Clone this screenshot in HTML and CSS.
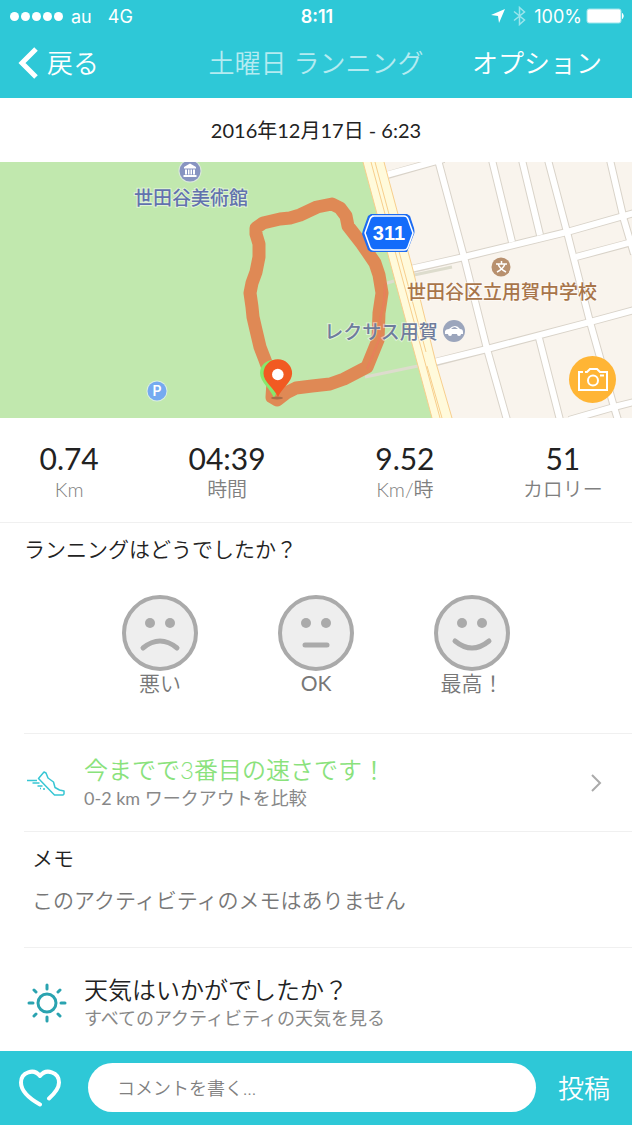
FILE: index.html
```html
<!DOCTYPE html>
<html lang="ja">
<head>
  <meta charset="UTF-8" />
  <meta name="viewport" content="width=device-width, initial-scale=1" />
  <title>土曜日 ランニング</title>
  <link rel="stylesheet" href="styles.css">
</head>
<body>
  <header class="top">
    <div class="status">
      <div class="status-left">
        <span class="signal"><i></i><i></i><i></i><i></i><i></i></span>
        <span>au</span>
        <span class="network">4G</span>
      </div>
      <b class="clock">8:11</b>
      <div class="status-right">
        <svg width="14" height="14" viewBox="0 0 14 14"><path d="M14 0 8 14 7 7 0 6z" fill="#fff"/></svg>
        <svg class="bluetooth" width="13" height="20" viewBox="0 0 13 20"><path d="M1 5.500 11.500 14 6.500 18.500V1.500L11.500 6 1 14.500" fill="none" stroke="#9be5ec" stroke-width="1.500"/></svg>
        <span>100%</span>
        <svg width="38" height="16" viewBox="0 0 38 16"><rect x="1" y="1" width="34" height="14" rx="2" fill="#fff" stroke="#9be5ec"/><path d="M36.500 5.500q1.500 2.500 0 5z" fill="#fff" stroke="#fff"/></svg>
      </div>
    </div>
    <nav class="bar">
      <a class="back" href="#">
        <svg width="20" height="32" viewBox="0 0 20 32"><path d="M18 2 4 16l14 14" fill="none" stroke="#fff" stroke-width="5"/></svg>
        戻る
      </a>
      <h1>土曜日 ランニング</h1>
      <button class="options" type="button">オプション</button>
    </nav>
  </header>

  <main>
    <p class="date">2016年12月17日 - 6:23</p>

    <div class="map">
      <svg class="map-canvas" viewBox="0 0 632 256" preserveAspectRatio="xMidYMid slice">
        <rect width="632" height="256" fill="#c1e8ae"/>
        <path d="M374 0H632V256H442z" fill="#f9f4ed"/>

        <!-- streets: grey edge first, white on top -->
        <g fill="none" stroke="#d9d3c9" stroke-width="8">
          <path d="M492-2 512 80M522-2 540 73M610-2 624 58 634 92M539 176 560 258"/>
          <path d="M576 95 629 81M569 258 614 245 634 240"/>
          <path d="M388 13 444-3M412 107 464 95 567 70 634 51M436 200 487 187 590 160 634 148"/>
          <path d="M438-2 464 95 487 187 507 258M548-2 567 70 590 160 614 245 618 258"/>
        </g>
        <g fill="none" stroke="#fff" stroke-width="6">
          <path d="M492-2 512 80M522-2 540 73M610-2 624 58 634 92M539 176 560 258"/>
          <path d="M576 95 632 80M569 258 614 245 634 240"/>
          <path d="M386 13 444-3M410 107 464 95 567 70 634 51M434 200 487 187 590 160 634 148"/>
          <path d="M438-2 464 95 487 187 507 258M548-2 567 70 590 160 614 245 618 258"/>
        </g>
        <path d="M414 113 452 105M384 122 394 119M365 215 418 204" fill="none" stroke="#dddccd" stroke-width="3"/>

        <!-- route 311 -->
        <path d="M363 0H384L413 108 436 201 452 256H432z" fill="#fffadb"/>
        <path d="M363 0 432 256M384 0 413 108 436 201 452 256M371 0 440 256M375 0 426 190M427 204 442 256" fill="none" stroke="#f7ce8c" stroke-width="1"/>

        <g class="poi poi-park">
          <circle cx="190" cy="9" r="11.500" fill="#dce9dd"/>
          <circle cx="190" cy="9" r="10.500" fill="#8794c1"/>
          <path d="M184 6.500V5L190 1.500 196 5V6.500zM185 7.500h2v5h-2zM188 7.500h1.500v5H188zM190.500 7.500h1.500v5h-1.500zM193 7.500h2v5h-2zM183.500 13h13v2h-13z" fill="#fff"/>
          <text x="191" y="43" text-anchor="middle">世田谷美術館</text>
        </g>

        <g>
          <circle cx="157" cy="229" r="10.500" fill="#dcefe0"/>
          <circle cx="157" cy="229" r="9.500" fill="#75aaf0"/>
          <text class="parking" x="157" y="234" text-anchor="middle">P</text>
        </g>

        <path class="run" d="M277 238 272 235 273 220 265 198 260 185 256 168 253 155 252 145 250 131 252 121 256 110 259 95V82L256 72V66L263 61 280 57 290 56 300 53 317 45 332 42 340 46 346 54 348 64 362 82 375 101 379 113 382 131 379 151 378 178 367 205 344 217 330 222 312 224 296 226 286 231z"/>
        <path d="M385 122 384 140 380 158 379 178 367 207" fill="none" stroke="#ef7860" stroke-width="2" opacity=".5"/>

        <g>
          <path d="M371 52h36l3 2 4 12q1 5 0 6l-7 18H371l-3-2-6-16 1-4 5-14z" fill="#1d6cf2"/>
          <path d="M372 54h32q3 0 4 3l5 14-5 14q-1 3-4 3H374q-3 0-4-3l-5-14 5-14q1-3 4-3z" fill="#146cfa" stroke="#fff" stroke-width="1.500"/>
          <text class="route-no" x="389" y="78" text-anchor="middle">311</text>
        </g>

        <g class="poi poi-school">
          <circle cx="501" cy="105" r="9.500" fill="#b8906e"/>
          <path d="M496 102h11M501.500 99v3M498 102q2 5 8 8M505 102q-2 5-8 8" fill="none" stroke="#fff" stroke-width="1.500"/>
          <text x="502" y="137" text-anchor="middle">世田谷区立用賀中学校</text>
        </g>

        <g class="poi poi-shop">
          <text x="381" y="177" text-anchor="middle">レクサス用賀</text>
          <circle cx="454" cy="169" r="11" fill="#9ba5bc"/>
          <path d="M445 169q1-2 4-2 3-3 6-3 3 0 5 3 3 0 3 3v2h-2a2 2 0 0 1-4 0h-5a2 2 0 0 1-4 0h-3z" fill="#fff"/>
          <path d="M451 167q2-2 4-2l3 2z" fill="#9ba5bc"/>
        </g>

        <g>
          <path d="M274 236C270 226 260 220 260 211a13 13 0 0 1 26 0z" fill="#87e86c"/>
          <ellipse cx="277" cy="236" rx="6" ry="1.500" fill="#a86c48"/>
          <path d="M278 235C274 226 263.500 220 263.500 211.500a14.300 14.300 0 0 1 28.600 0C292 220 282 226 278 235z" fill="#f15a22"/>
          <circle cx="277.800" cy="212.500" r="5.800" fill="#fff"/>
        </g>
      </svg>
      <button class="camera" type="button" aria-label="写真を追加">
        <svg width="32" height="26" viewBox="0 0 32 26" fill="none" stroke="#fff" stroke-width="2"><path d="M6 5H2v18h28V5h-7l-3-3h-7l-3 3H8"/><circle cx="16" cy="13.500" r="5"/><path d="M23 8.500h4"/></svg>
      </button>
    </div>

    <dl class="stats">
      <div><dd>0.74</dd><dt>Km</dt></div>
      <div><dd>04:39</dd><dt>時間</dt></div>
      <div><dd>9.52</dd><dt>Km/時</dt></div>
      <div><dd>51</dd><dt>カロリー</dt></div>
    </dl>

    <section class="feeling">
      <h2>ランニングはどうでしたか？</h2>
      <div class="faces">
        <button type="button">
          <svg width="76" height="76" viewBox="0 0 76 76"><circle class="head" cx="38" cy="38" r="36"/><circle class="eye" cx="28" cy="28" r="5"/><circle class="eye" cx="48" cy="28" r="5"/><path class="mouth" d="M21 53q17-14 34 0"/></svg>
          悪い
        </button>
        <button type="button">
          <svg width="76" height="76" viewBox="0 0 76 76"><circle class="head" cx="38" cy="38" r="36"/><circle class="eye" cx="28" cy="28" r="5"/><circle class="eye" cx="48" cy="28" r="5"/><path class="mouth" d="M27 50h22"/></svg>
          <span class="ok">OK</span>
        </button>
        <button type="button">
          <svg width="76" height="76" viewBox="0 0 76 76"><circle class="head" cx="38" cy="38" r="36"/><circle class="eye" cx="28" cy="28" r="5"/><circle class="eye" cx="48" cy="28" r="5"/><path class="mouth" d="M21 46q17 14 34 0"/></svg>
          最高！
        </button>
      </div>
    </section>

    <a class="row compare" href="#">
      <svg class="row-icon" width="40" height="40" viewBox="0 0 40 40" fill="none" stroke="#37c6d4" stroke-width="1.500" stroke-linejoin="round">
        <path d="M11.500 15.500 17 9l2 1 2 5 5.500 4 1.500 5.500 4.500 2.500 4.500 1v3l-1 1H27.500L25 29.500z"/>
        <path d="M0 17.500h10M5.500 20h7M10.500 23h5M13 25.500h1M16 26h2"/>
      </svg>
      <div class="row-text">
        <h3 class="good">今までで3番目の速さです！</h3>
        <p>0-2 km ワークアウトを比較</p>
      </div>
      <svg class="chevron" width="12" height="20" viewBox="0 0 12 20"><path d="M2 2 10 10 2 18" fill="none" stroke="#aaa" stroke-width="2"/></svg>
    </a>

    <section class="memo">
      <h2>メモ</h2>
      <p>このアクティビティのメモはありません</p>
    </section>

    <a class="row weather" href="#">
      <svg class="row-icon" width="40" height="40" viewBox="0 0 40 40" fill="none" stroke="#2aa3b0" stroke-width="3" stroke-linecap="round">
        <circle cx="20" cy="20" r="9"/>
        <path d="M20 2v4M20 34v4M2 20h4M34 20h4M7 7l2 2M31 31l2 2M33 7l-2 2M9 31l-2 2"/>
      </svg>
      <div class="row-text">
        <h3>天気はいかがでしたか？</h3>
        <p>すべてのアクティビティの天気を見る</p>
      </div>
    </a>
  </main>

  <form class="comment">
    <button class="like" type="button" aria-label="いいね">
      <svg width="42" height="38" viewBox="0 0 42 38"><path d="M21 35.500C13 31 2 23 2 13.500 2 3 15 -1 21 7 27-1 40 3 40 13.500 40 20 35 25 30 29.500" fill="none" stroke="#fff" stroke-width="4" stroke-linecap="round" stroke-linejoin="round"/></svg>
    </button>
    <input type="text" aria-label="コメント" placeholder="コメントを書く…" />
    <button class="post" type="submit">投稿</button>
  </form>
</body>
</html>
```

FILE: styles.css
```css
* {
  box-sizing: border-box;
}
body {
  margin: 0;
  min-height: 100vh;
  display: flex;
  flex-direction: column;
  font-family: Lato, 'Noto Sans CJK JP', sans-serif;
  font-weight: 350;
  color: #222;
  background-color: #fff;
}
main {
  flex: 1;
}
h1, h2, h3, p, dl, dd, dt {
  margin: 0;
  font-weight: inherit;
}
a {
  color: inherit;
  text-decoration: none;
}
button {
  padding: 0;
  border: none;
  background: none;
  font: inherit;
  color: inherit;
  cursor: pointer;
}
svg {
  display: block;
}

/* header */
.top {
  background-color: #2ec8d7;
  color: #fff;
}
.status {
  display: grid;
  grid-template-columns: 1fr auto 1fr;
  align-items: center;
  height: 32px;
  padding: 0 8px 0 10px;
  font-family: Inter, 'Liberation Sans', sans-serif;
  font-size: 18px;
  font-weight: 400;
}
.status-left, .status-right {
  display: flex;
  align-items: center;
}
.status-right {
  justify-content: flex-end;
  gap: 4px;
}
.signal {
  display: flex;
  gap: 2px;
  margin-right: 8px;
}
.signal i {
  width: 9px;
  height: 9px;
  border-radius: 50%;
  background-color: #fff;
}
.network {
  margin-left: 16px;
}
.clock {
  font-weight: 600;
}
.bluetooth {
  margin: 0 4px;
}
.bar {
  display: grid;
  grid-template-columns: 1fr auto 1fr;
  align-items: center;
  height: 66px;
  padding: 0 30px 4px;
  font-size: 26px;
  line-height: 36px;
}
.bar h1 {
  font-size: 26px;
  color: #b4ebf1;
}
.back {
  display: flex;
  align-items: center;
  gap: 9px;
  margin-left: -12px;
}
.options {
  justify-self: end;
}

.date {
  padding: 17px 0;
  font-size: 20px;
  font-weight: 400;
  line-height: 30px;
  text-align: center;
}

/* map */
.map {
  position: relative;
  height: 256px;
}
.map-canvas {
  width: 100%;
  height: 100%;
}
.run {
  fill: none;
  stroke: #df8955;
  stroke-width: 13px;
  stroke-linejoin: round;
}
.poi text {
  font-family: 'Noto Sans CJK JP', sans-serif;
  font-size: 19px;
  font-weight: 500;
  stroke: #fff;
  stroke-width: 2px;
  stroke-opacity: .5;
  paint-order: stroke;
}
.poi-park text {
  fill: #6272ae;
}
.poi-school text {
  fill: #a8754a;
}
.poi-shop text {
  fill: #6e7c9c;
}
.parking {
  font-family: Inter, sans-serif;
  font-size: 14px;
  font-weight: 600;
  fill: #fff;
}
.route-no {
  font-family: 'Liberation Sans', sans-serif;
  font-size: 20px;
  font-weight: 700;
  fill: #fff;
}
.camera {
  position: absolute;
  right: 16px;
  bottom: 15px;
  display: flex;
  align-items: center;
  justify-content: center;
  width: 47px;
  height: 47px;
  border-radius: 50%;
  background-color: #ffb535;
}

/* numbers under the map */
.stats {
  display: grid;
  grid-template-columns: 7fr 9fr 9fr 7fr;
  padding: 22px 0 20px;
  border-bottom: 1px solid #f0f0f0;
  text-align: center;
}
.stats div {
  display: flex;
  flex-direction: column;
}
.stats dd {
  font-size: 30px;
  font-weight: 400;
  line-height: 36px;
}
.stats dt {
  font-size: 20px;
  line-height: 26px;
  color: #808080;
}

.feeling {
  padding: 11px 0 38px 24px;
}
.feeling h2, .memo {
  font-size: 21px;
  line-height: 30px;
}
.faces {
  display: flex;
  justify-content: center;
  gap: 80px;
  margin: 31px 24px 0 0;
}
.faces button {
  display: flex;
  flex-direction: column;
  align-items: center;
  width: 76px;
  font-size: 21px;
  line-height: 24px;
  white-space: nowrap;
  color: #777;
}
.ok {
  font-weight: 400;
}
.head {
  fill: #eee;
  stroke: #aaa;
  stroke-width: 4px;
}
.eye {
  fill: #aaa;
}
.mouth {
  fill: none;
  stroke: #aaa;
  stroke-width: 5px;
  stroke-linecap: round;
}

/* list rows */
.row, .memo {
  margin-left: 24px;
  border-top: 1px solid #f0f0f0;
}
.row {
  display: flex;
  align-items: center;
  padding: 18px 30px 18px 3px;
}
.row-icon {
  margin-right: 17px;
}
.row-text {
  flex: 1;
  padding-bottom: 5px;
}
.row-text h3 {
  font-size: 24px;
  line-height: 36px;
}
.row-text p {
  font-size: 18px;
  font-weight: 400;
  line-height: 20px;
  color: #888;
}
.row-text .good {
  color: #8ae27c;
}
.memo {
  padding: 11px 8px 32px;
}
.memo h2 {
  font-size: 21px;
}
.memo p {
  margin-top: 12px;
  color: #777;
}
.weather {
  padding-top: 24px;
}

/* comment bar */
.comment {
  position: sticky;
  bottom: 0;
  display: flex;
  align-items: center;
  height: 75px;
  padding: 0 22px 2px 19px;
  background-color: #2ec8d7;
  color: #fff;
}
.comment input {
  flex: 1;
  min-width: 0;
  height: 49px;
  margin: 0 22px 0 27px;
  padding: 0 29px;
  border: none;
  border-radius: 25px;
  background-color: #fff;
  font: inherit;
  font-size: 18px;
  color: #222;
}
.comment input::placeholder {
  color: #808080;
  opacity: 1;
}
.post {
  font-size: 26px;
  line-height: 36px;
}
```
